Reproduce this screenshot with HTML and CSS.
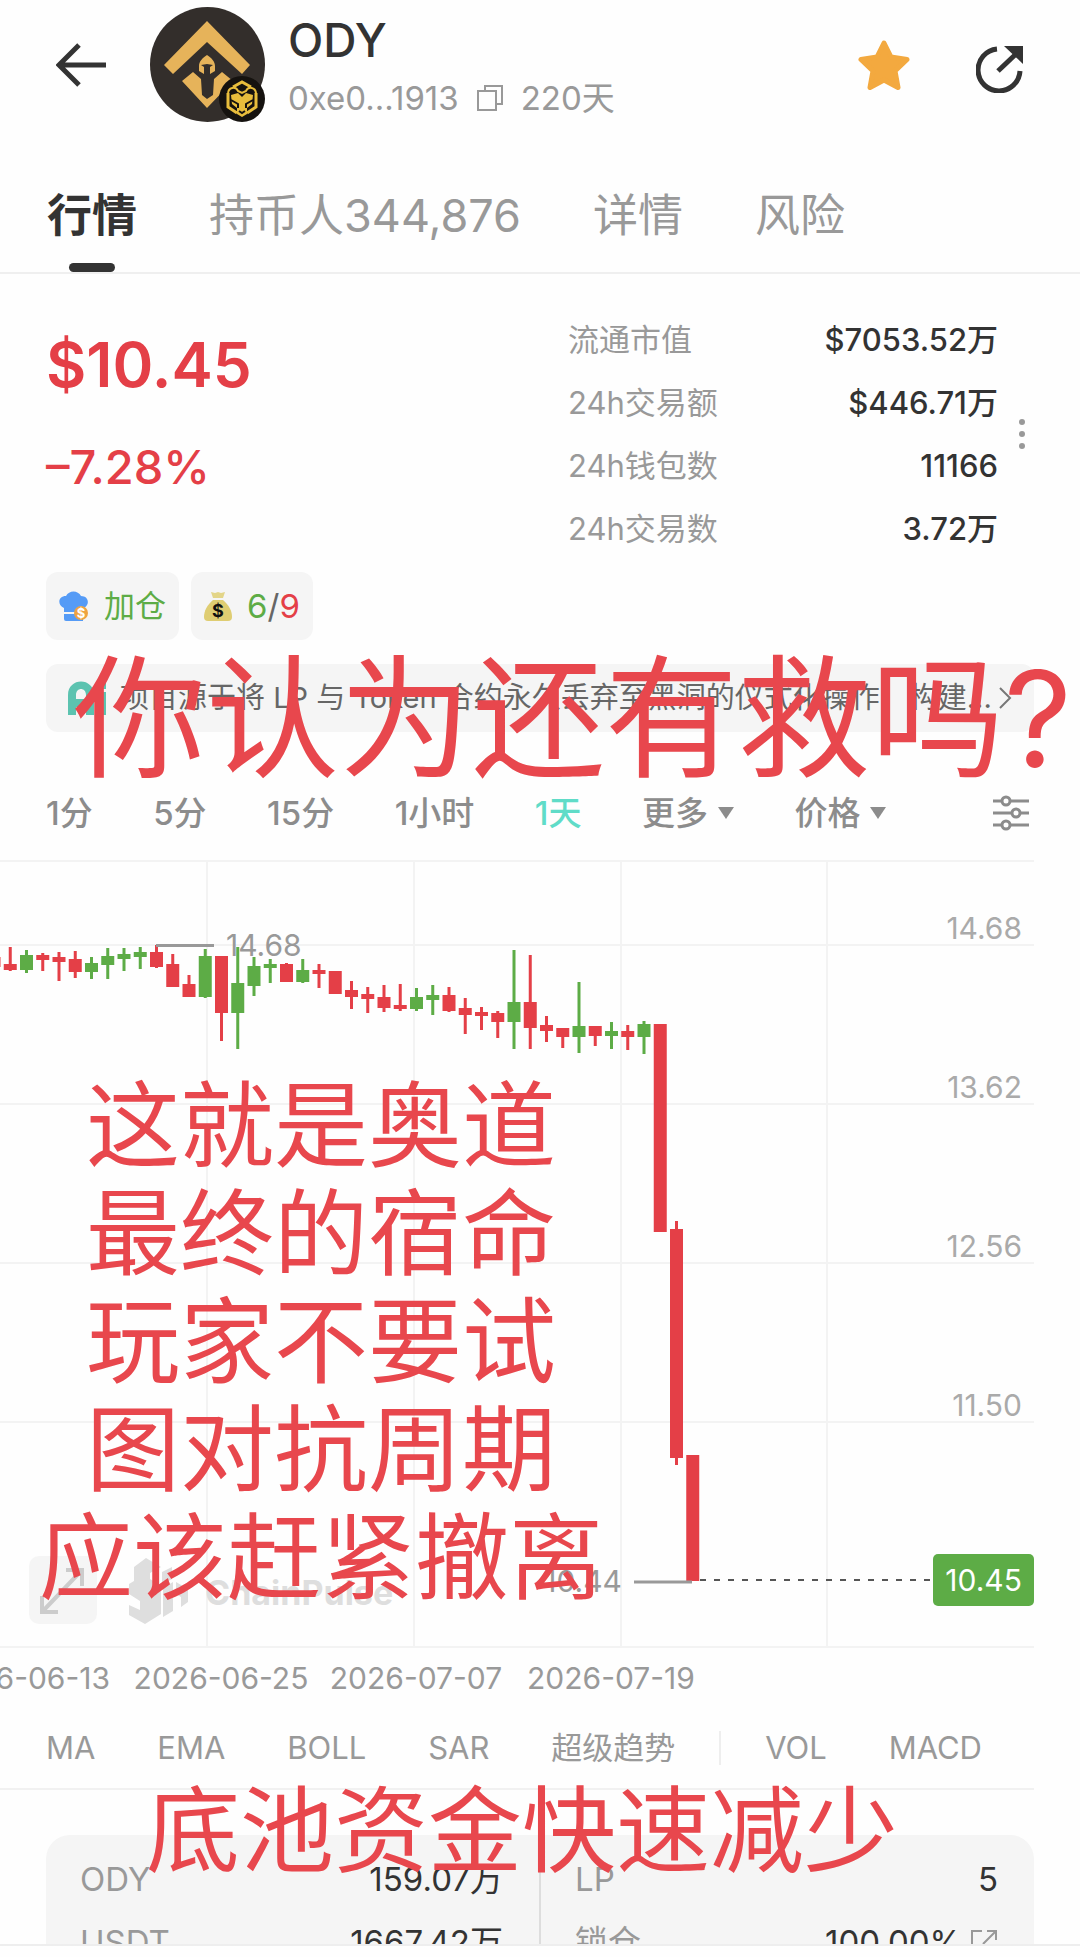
FILE: index.html
```
<!DOCTYPE html>
<html lang="zh-CN">
<head>
  <meta charset="UTF-8">
  <meta name="viewport" content="width=device-width, initial-scale=1.0">
  <title>ODY</title>
  <link rel="stylesheet" href="styles.css">
</head>
<body>
  <!-- Header -->
  <header class="header">
    <button type="button" class="icon-btn" aria-label="返回">
      <svg width="50" height="44" viewBox="0 0 50 44" fill="none" stroke="#333" stroke-width="5">
        <path d="M50 22H4M23 2L3 22l20 20" />
      </svg>
    </button>
    <div class="avatar">
      <svg width="115" height="115" viewBox="0 0 115 115">
        <circle cx="57.5" cy="57.5" r="57.5" fill="#332e2b" />
        <g fill="#e6b35a">
          <path d="M57 14L100 58l-8 9L57 35 23 67l-9-9z" />
          <path d="M57 48c5 3 8 7 8 11v5l-5 3V60l3-2-6-1-6 1 3 2v7l-5-3v-5c0-4 3-8 8-11z" />
          <path d="M43 65l8 7 1 16 5 4 6-4 1-16 8-7 11 9-26 27-25-27z" />
        </g>
        <circle cx="92" cy="92" r="23" fill="#15120f" />
        <g fill="none" stroke="#e8bd3c" stroke-width="3">
          <path d="M83 80l9-5 9 5M78 86v14l9 6M106 86v14l-9 6" />
          <path d="M78 87c0-7 8-8 10-3l4 2 4-2c2-5 10-4 10 3" stroke-width="2" />
        </g>
        <path d="M81 88l7-2 4 4 4-4 7 2-1 9-5 4v6l-5 3-5-3v-6l-5-4z" fill="#e8bd3c" />
        <path d="M81 93l7 4v4M103 93l-7 4v4M89 104l3 2 3-2" fill="none" stroke="#15120f" stroke-width="2" />
      </svg>
    </div>
    <div class="token">
      <h1>ODY</h1>
      <p class="token-meta">
        <span>0xe0...1913</span>
        <button type="button" class="icon-btn" aria-label="复制">
          <svg width="26" height="26" viewBox="0 0 26 26" fill="none" stroke="#999" stroke-width="2">
            <path d="M1 6h18v19H1zM8 6V1h17v18h-6" />
          </svg>
        </button>
        <span>220天</span>
      </p>
    </div>
    <div class="header-actions">
      <button type="button" class="icon-btn" aria-label="收藏">
        <svg width="52" height="50" viewBox="0 0 52 50">
          <path d="M26 3l7 14 16 2.500-12 11.500 3 16.500L26 40 12 47.500 15 31 3 19.500 19 17z" fill="#f3a93f" stroke="#f3a93f" stroke-width="5" stroke-linejoin="round" />
        </svg>
      </button>
      <button type="button" class="icon-btn share" aria-label="分享">
        <svg width="47" height="47" viewBox="0 0 47 47" fill="none" stroke="#333" stroke-width="5">
          <path d="M21 3A21 21 0 1 0 44 25" />
          <path d="M22 25L40 8" />
          <path d="M28 0h19v18z" fill="#333" stroke="none" />
        </svg>
      </button>
    </div>
  </header>

  <!-- Tabs -->
  <nav class="tabs">
    <a href="#market" class="active">行情</a>
    <a href="#holders">持币人344,876</a>
    <a href="#detail">详情</a>
    <a href="#risk">风险</a>
  </nav>

  <!-- Price and stats -->
  <section class="overview">
    <div class="quote">
      <div class="price">$10.45</div>
      <div class="change">–7.28%</div>
    </div>
    <dl class="stats">
      <div><dt>流通市值</dt><dd>$7053.52万</dd></div>
      <div><dt>24h交易额</dt><dd>$446.71万</dd></div>
      <div><dt>24h钱包数</dt><dd>11166</dd></div>
      <div><dt>24h交易数</dt><dd>3.72万</dd></div>
    </dl>
    <button type="button" class="icon-btn stats-more" aria-label="更多数据">
      <svg width="6" height="30" viewBox="0 0 6 30" fill="#999">
        <circle cx="3" cy="3" r="3" /><circle cx="3" cy="15" r="3" /><circle cx="3" cy="27" r="3" />
      </svg>
    </button>
  </section>

  <div class="chips">
    <button type="button" class="chip">
      <svg width="30" height="30" viewBox="0 0 30 30">
        <path d="M5 21v-4C-2 14-1 5 7 5c3-6 12-6 15 0 8 0 9 9 3 12v4z" fill="#559bf6" />
        <path d="M5 23h19v7H7q-2 0-2-2z" fill="#559bf6" />
        <circle cx="22" cy="22" r="7" fill="#efa341" />
        <text x="22" y="27" class="coin-sign">$</text>
      </svg>
      <span class="up">加仓</span>
    </button>
    <button type="button" class="chip">
      <svg width="28" height="30" viewBox="0 0 28 30">
        <path d="M7 1l4 1 3-1 3 1 4-1-2 6H9z" fill="#e3d588" />
        <path d="M9 9h10c6 5 9 11 9 17q0 4-4 4H4q-4 0-4-4C0 20 3 14 9 9z" fill="#dfcd72" />
        <text x="14" y="26" class="bag-sign">$</text>
      </svg>
      <span class="ratio"><span class="up">6</span>/<span class="down">9</span></span>
    </button>
  </div>

  <div class="notice">
    <svg width="38" height="34" viewBox="0 0 38 34" fill="#5cc3b0">
      <path d="M0 34V14C0-4 26-4 26 14v20h-8v-8H8v8zM8 18h10v-4c0-8-10-8-10 0z" />
      <path d="M30 11h8v23h-8zM30 2h8v6h-8z" />
    </svg>
    <p>项目源于将 LP 与 Token 合约永久丢弃至黑洞的仪式化操作，构建...</p>
    <svg class="notice-arrow" width="14" height="22" viewBox="0 0 14 22" fill="none" stroke="#777" stroke-width="2">
      <path d="M2 1l10 10L2 21" />
    </svg>
    <p class="caption caption-top">你认为还有救吗?</p>
  </div>

  <!-- Chart intervals -->
  <div class="intervals">
    <button type="button">1分</button>
    <button type="button">5分</button>
    <button type="button">15分</button>
    <button type="button">1小时</button>
    <button type="button" class="active">1天</button>
    <label class="dropdown">
      <select aria-label="更多周期"><option>更多</option></select>
      <svg width="16" height="12" viewBox="0 0 16 12"><path d="M0 0h16L8 12z" fill="#8c8c8c" /></svg>
    </label>
    <label class="dropdown">
      <select aria-label="数据类型"><option>价格</option></select>
      <svg width="16" height="12" viewBox="0 0 16 12"><path d="M0 0h16L8 12z" fill="#8c8c8c" /></svg>
    </label>
    <button type="button" class="icon-btn settings" aria-label="图表设置">
      <svg width="36" height="36" viewBox="0 0 36 36" fill="#fff" stroke="#8c8c8c" stroke-width="3">
        <path d="M0 6h36M0 18h36M0 30h36" />
        <circle cx="13" cy="6" r="4" /><circle cx="23" cy="18" r="4" /><circle cx="13" cy="30" r="4" />
      </svg>
    </button>
  </div>

  <!-- Candlestick chart -->
  <div class="chart">
    <svg class="chart-svg" viewBox="0 0 1080 850">
      <path class="grid" d="M0 1H1034M0 85H1034M0 244H1034M0 403H1034M0 562H1034M0 787H1034M207 1V787M414 1V787M621 1V787M827 1V787" />

      <g class="watermark">
        <rect x="29" y="696" width="68" height="68" rx="10" fill="#f5f5f5" />
        <path d="M66 710h16v16M82 710L42 752M58 752H42V736" fill="none" stroke="#ccc" stroke-width="4" />
        <g fill="#dedede">
          <path d="M146 698l15 9-11 6v6l11 7v28l-16 10-16-9v-10l11 5v-9l-11-7v-10l5-3v-14z" />
          <path d="M162 712l10-5v12l-10 6zM163 728l10-6v29l-10 6zM176 722l12 7v13l-7 5v-10l-5-3z" />
        </g>
        <text x="205" y="745" class="brand">ChainPulse</text>
      </g>

      <g id="candles"></g>

      <path d="M156 85.500H214M634 722H692" stroke="#999" stroke-width="3" />
      <path d="M700 720H933" stroke="#555" stroke-width="2" stroke-dasharray="6 8" />
      <rect x="933" y="694" width="101" height="52" rx="5" fill="#5dac46" />

      <g class="marks">
        <text x="226" y="96">14.68</text>
        <text x="622" y="732" text-anchor="end">10.44</text>
      </g>
      <g class="prices" text-anchor="end">
        <text x="1022" y="79">14.68</text>
        <text x="1022" y="238">13.62</text>
        <text x="1022" y="397">12.56</text>
        <text x="1022" y="556">11.50</text>
        <text x="1022" y="731" class="current">10.45</text>
      </g>
      <g class="dates" text-anchor="middle">
        <text x="25" y="829">2026-06-13</text>
        <text x="221" y="829">2026-06-25</text>
        <text x="416" y="829">2026-07-07</text>
        <text x="611" y="829">2026-07-19</text>
      </g>
    </svg>
    <p class="caption caption-chart">这就是奥道<br>最终的宿命<br>玩家不要试<br>图对抗周期<br>应该赶紧撤离</p>
  </div>

  <!-- Indicators -->
  <div class="indicators">
    <button type="button">MA</button>
    <button type="button">EMA</button>
    <button type="button">BOLL</button>
    <button type="button">SAR</button>
    <button type="button">超级趋势</button>
    <span class="divider"></span>
    <button type="button">VOL</button>
    <button type="button">MACD</button>
  </div>

  <!-- Liquidity pool -->
  <section class="pool">
    <dl class="pool-col">
      <div><dt>ODY</dt><dd>159.07万</dd></div>
      <div><dt>USDT</dt><dd>1667.42万</dd></div>
    </dl>
    <dl class="pool-col">
      <div><dt>LP</dt><dd>5</dd></div>
      <div>
        <dt>锁仓</dt>
        <dd>
          100.00%
          <svg width="28" height="28" viewBox="0 0 28 28" fill="none" stroke="#999" stroke-width="2">
            <path d="M12 2H2v24h24V16M17 2h9v9M26 2L13 15" />
          </svg>
        </dd>
      </div>
    </dl>
    <p class="caption caption-pool">底池资金快速减少</p>
  </section>

  <div class="bottom-bar"></div>

  <script>
    // [direction, high, open/close top, open/close bottom, low]
    const candles = [
      ['d', -53, 97, 107, 109], ['d', 87, 104, 110, 111], ['u', 90, 95, 110, 113], ['d', 93, 95, 100, 111],
      ['d', 92, 97, 102, 121], ['d', 91, 99, 112, 118], ['u', 97, 103, 112, 119],
      ['u', 88, 96, 105, 119], ['u', 88, 94, 99, 111], ['u', 87, 92, 97, 109],
      ['d', 85, 92, 107, 108], ['d', 94, 104, 127, 127], ['d', 115, 124, 137, 137],
      ['u', 89, 96, 137, 138], ['d', 96, 96, 153, 181], ['u', 87, 123, 153, 189],
      ['u', 97, 106, 126, 136], ['u', 99, 104, 108, 123], ['d', 103, 104, 122, 122],
      ['u', 99, 110, 122, 123], ['d', 104, 110, 114, 128], ['d', 111, 111, 134, 134],
      ['d', 121, 130, 137, 149], ['d', 127, 134, 139, 153], ['d', 125, 137, 148, 152],
      ['d', 124, 145, 149, 151], ['u', 128, 137, 149, 151], ['u', 125, 135, 140, 155],
      ['d', 127, 135, 151, 152], ['d', 138, 148, 155, 174], ['d', 147, 152, 156, 170],
      ['d', 151, 153, 162, 178], ['u', 90, 142, 162, 189], ['d', 95, 142, 168, 189],
      ['d', 156, 165, 171, 182], ['d', 168, 168, 177, 188], ['u', 122, 166, 177, 193],
      ['d', 166, 166, 176, 186], ['u', 162, 171, 176, 189], ['d', 165, 171, 177, 190],
      ['u', 161, 164, 177, 194], ['d', 164, 164, 372, 372], ['d', 361, 369, 598, 605],
      ['d', 595, 595, 721, 721]
    ];
    const step = 16.25;
    const group = document.getElementById('candles');

    function addRect(x, y, width, height, color) {
      const rect = document.createElementNS('http://www.w3.org/2000/svg', 'rect');
      rect.setAttribute('x', x);
      rect.setAttribute('y', y);
      rect.setAttribute('width', width);
      rect.setAttribute('height', height);
      rect.setAttribute('fill', color);
      group.appendChild(rect);
    }

    candles.forEach(([dir, high, top, bottom, low], i) => {
      const color = dir === 'u' ? '#5dac46' : '#e43f47';
      const center = -6 + step * i;
      // the first candle is cut off by the left edge
      if (i > 0) {
        addRect(center - 1.5, high, 3, low - high, color);
      }
      addRect(center - 6.5, top, 13, bottom - top, color);
    });
  </script>
</body>
</html>
```
FILE: styles.css
```
/* Reset and Base Styles */
* {
  margin: 0;
  padding: 0;
  box-sizing: border-box;
}

body {
  min-height: 100vh;
  max-height: 100vh;
  overflow: hidden;
  background: #fefefe;
  color: #333;
  font-family: Inter, "Noto Sans CJK SC", sans-serif;
  font-size: 33px;
}

svg {
  display: block;
  flex-shrink: 0;
}

button,
select {
  border: none;
  background: none;
  color: inherit;
  font: inherit;
  cursor: pointer;
}

.up {
  color: #5dac46;
}

.down {
  color: #e43f47;
}

/* Header */
.header {
  display: flex;
  align-items: center;
  height: 122px;
  padding: 7px 57px 0 56px;
}

.avatar {
  margin: 0 23px 0 44px;
}

.token {
  margin-top: 8px;
}

.token h1 {
  font-size: 46px;
  font-weight: 500;
  line-height: 58px;
}

.token-meta {
  display: flex;
  align-items: center;
  gap: 18px;
  color: #999;
  line-height: 58px;
}

.header-actions {
  display: flex;
  align-items: center;
  gap: 66px;
  margin-left: auto;
}

.header-actions .share {
  margin-top: 10px;
}

/* Tabs */
.tabs {
  display: flex;
  gap: 72px;
  height: 152px;
  padding: 60px 47px 0;
  border-bottom: 2px solid #efefef;
  font-size: 45px;
  line-height: 68px;
}

.tabs a {
  position: relative;
  color: #999;
  text-decoration: none;
  white-space: nowrap;
}

.tabs a.active {
  color: #333;
  font-weight: bold;
}

.tabs a.active::after {
  content: "";
  position: absolute;
  left: 50%;
  bottom: 0;
  width: 46px;
  height: 9px;
  margin-left: -23px;
  border-radius: 5px;
  background: #333;
}

/* Price and stats */
.overview {
  display: flex;
  padding: 34px 55px 12px 46px;
}

.quote {
  flex: 1;
  padding-top: 25px;
  color: #e43f47;
}

.price {
  font-size: 62px;
  font-weight: 600;
  line-height: 64px;
}

.change {
  margin-top: 38px;
  font-size: 47px;
  font-weight: 500;
  line-height: 64px;
}

.stats {
  width: 430px;
  font-size: 31px;
}

.stats div,
.pool-col div {
  display: flex;
  justify-content: space-between;
  line-height: 63px;
}

.stats dt {
  color: #999;
}

.stats dd {
  font-weight: 500;
}

.stats-more {
  margin-left: 21px;
}

/* Chips */
.chips {
  display: flex;
  gap: 12px;
  padding: 0 46px;
}

.chip {
  display: flex;
  align-items: center;
  gap: 15px;
  height: 68px;
  padding: 0 13px;
  border-radius: 12px;
  background: #f5f5f5;
  color: #666;
  font-size: 31px;
  line-height: 66px;
}

.chip .ratio {
  font-size: 33px;
}

.coin-sign,
.bag-sign {
  font-size: 13px;
  font-weight: bold;
  text-anchor: middle;
  fill: #fff;
}

.bag-sign {
  font-size: 18px;
  fill: #111;
}

/* Notice */
.notice {
  position: relative;
  display: flex;
  align-items: center;
  height: 68px;
  margin: 24px 46px 0;
  padding: 0 22px;
  border-radius: 12px;
  background: #f5f5f5;
  color: #666;
  font-size: 29px;
  line-height: 68px;
  white-space: nowrap;
}

.notice p:first-of-type {
  margin-left: 14px;
}

.notice-arrow {
  margin-left: auto;
}

/* Captions over the page */
.caption {
  position: absolute;
  z-index: 2;
  color: #e8474d;
  font-size: 94px;
  line-height: 108px;
  text-align: center;
  white-space: nowrap;
}

.caption-top {
  top: -12px;
  left: 27px;
  font-size: 133px;
  line-height: 133px;
}

.caption-chart {
  top: 212px;
  left: 39px;
}

.caption-pool {
  top: -58px;
  left: 100px;
}

/* Chart intervals */
.intervals {
  display: flex;
  align-items: center;
  justify-content: space-between;
  height: 128px;
  padding: 34px 51px 0 46px;
  color: #8c8c8c;
  font-weight: 500;
  line-height: 48px;
}

.intervals .active {
  color: #60dcc8;
}

.intervals .settings {
  margin-left: 46px;
}

.dropdown {
  display: flex;
  align-items: center;
  gap: 10px;
}

.dropdown select {
  appearance: none;
}

/* Candlestick chart */
.chart {
  position: relative;
}

.chart-svg {
  width: 100%;
  height: auto;
}

.grid {
  fill: none;
  stroke: #f3f3f3;
  stroke-width: 2;
}

.brand {
  font-size: 34px;
  font-weight: bold;
  fill: #dedede;
}

.marks,
.prices,
.dates {
  font-size: 30px;
  fill: #999;
}

.prices {
  fill: #aaa;
}

.prices .current {
  fill: #fff;
}

/* Indicators */
.indicators {
  display: flex;
  align-items: center;
  justify-content: space-between;
  height: 80px;
  margin-right: 46px;
  padding: 0 52px 2px 46px;
  border-bottom: 2px solid #f1f1f1;
  color: #999;
  font-size: 31px;
  line-height: 48px;
}

.divider {
  width: 2px;
  height: 34px;
  margin: 0 -18px;
  background: #eee;
}

/* Liquidity pool */
.pool {
  position: relative;
  display: flex;
  margin: 45px 46px 0;
  padding: 13px 0;
  border-radius: 24px;
  background: #f5f5f5;
}

.pool-col {
  flex: 1;
  padding: 0 36px 0 34px;
}

.pool-col + .pool-col {
  border-left: 2px solid #ddd;
}

.pool-col dt {
  color: #999;
}

.pool-col dd {
  display: flex;
  align-items: center;
  gap: 8px;
}

.bottom-bar {
  position: fixed;
  right: 0;
  bottom: 0;
  left: 0;
  height: 13px;
  border-top: 2px solid #eee;
  background: #fefefe;
  z-index: 3;
}
```
